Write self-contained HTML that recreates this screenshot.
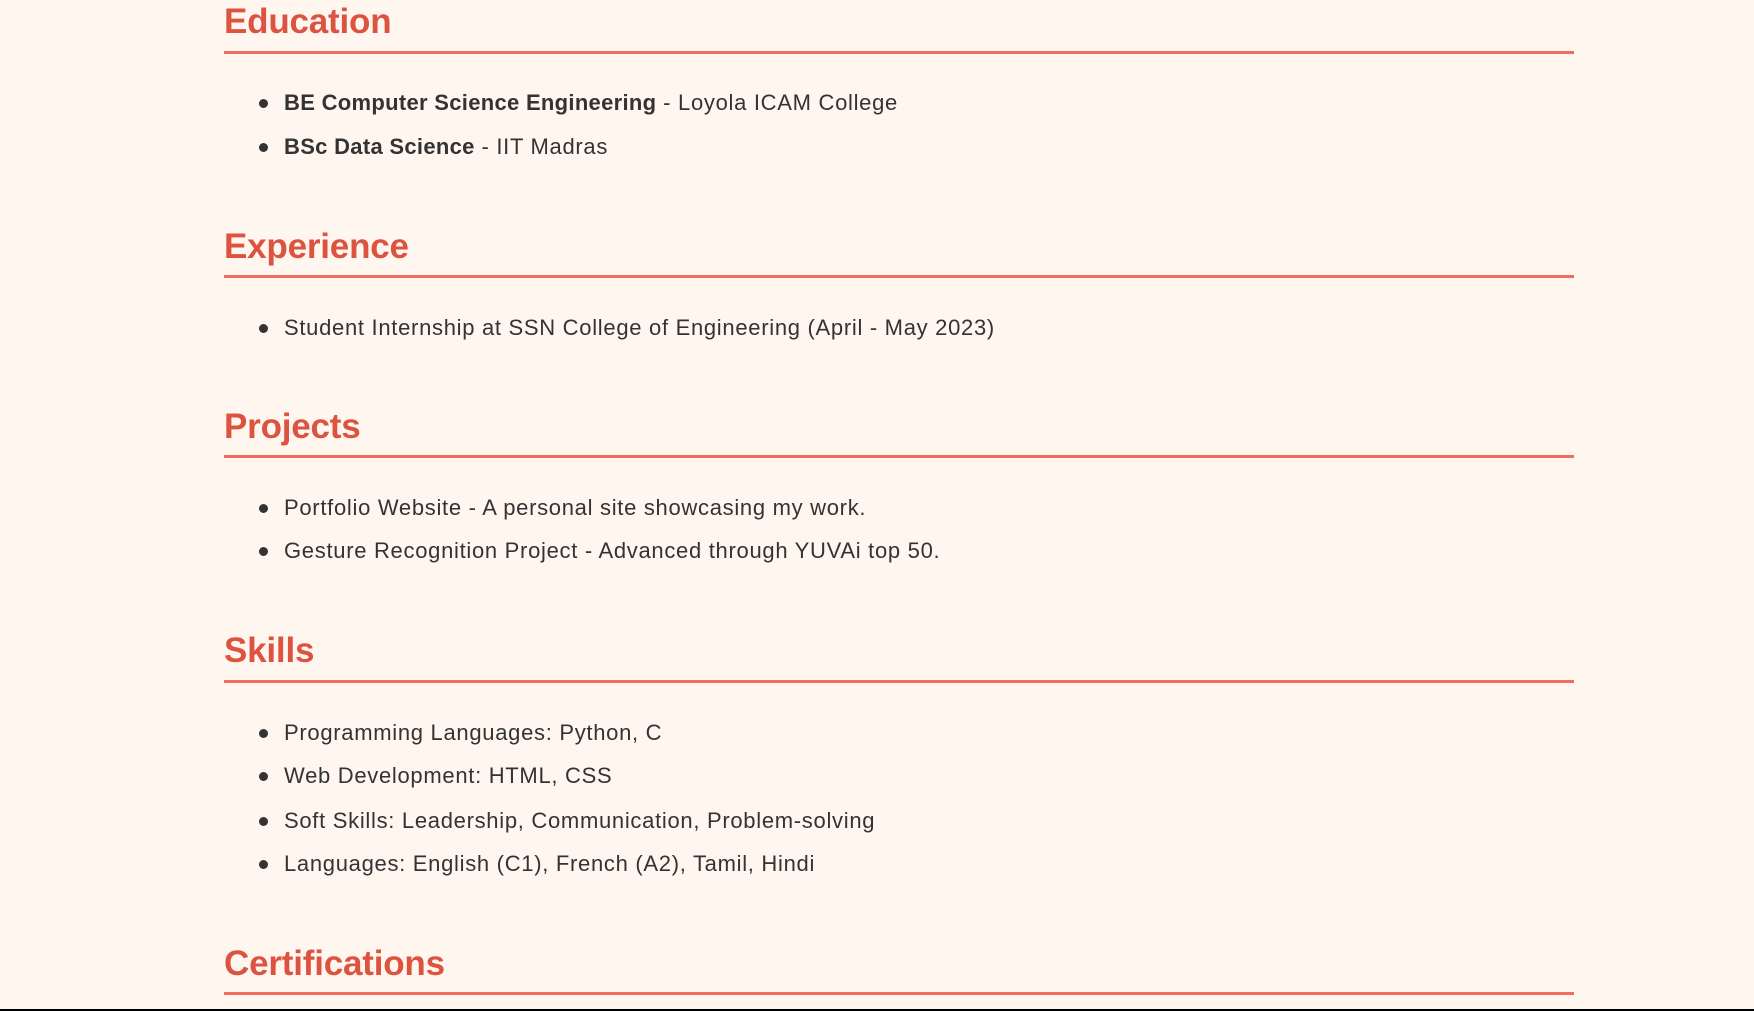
<!DOCTYPE html>
<html><head><meta charset="utf-8"><style>
html,body{margin:0;padding:0}
body{width:1754px;height:1011px;background:#fff6f0;position:relative;overflow:hidden;font-family:"Liberation Sans",sans-serif;color:#333}
.h{position:absolute;left:224px;font-size:35px;line-height:40px;font-weight:bold;color:#dc5440;margin:0;letter-spacing:-0.2px}
.l{position:absolute;left:224px;width:1350px;height:3px;background:#f26d5d}
.i{position:absolute;left:284px;font-size:22px;line-height:24px;white-space:nowrap;letter-spacing:0.7px}
.i::before{content:"";position:absolute;left:-25px;top:8px;width:9px;height:9px;border-radius:50%;background:#333}
b{font-weight:bold;letter-spacing:0.3px}
.bot{position:absolute;left:0;top:1009px;width:1754px;height:2px;background:#000}
</style></head><body>
<div class="h" style="top:2px">Education</div><div class="l" style="top:51px"></div>
<div class="i" style="top:91px"><b>BE Computer Science Engineering</b> - Loyola ICAM College</div>
<div class="i" style="top:135px"><b>BSc Data Science</b> - IIT Madras</div>
<div class="h" style="top:227px">Experience</div><div class="l" style="top:275px"></div>
<div class="i" style="top:316px">Student Internship at SSN College of Engineering (April - May 2023)</div>
<div class="h" style="top:407px">Projects</div><div class="l" style="top:455px"></div>
<div class="i" style="top:496px">Portfolio Website - A personal site showcasing my work.</div>
<div class="i" style="top:539px">Gesture Recognition Project - Advanced through YUVAi top 50.</div>
<div class="h" style="top:631px">Skills</div><div class="l" style="top:680px"></div>
<div class="i" style="top:721px">Programming Languages: Python, C</div>
<div class="i" style="top:764px">Web Development: HTML, CSS</div>
<div class="i" style="top:809px">Soft Skills: Leadership, Communication, Problem-solving</div>
<div class="i" style="top:852px">Languages: English (C1), French (A2), Tamil, Hindi</div>
<div class="h" style="top:944px">Certifications</div><div class="l" style="top:992px"></div>
<div class="bot"></div>
</body></html>
